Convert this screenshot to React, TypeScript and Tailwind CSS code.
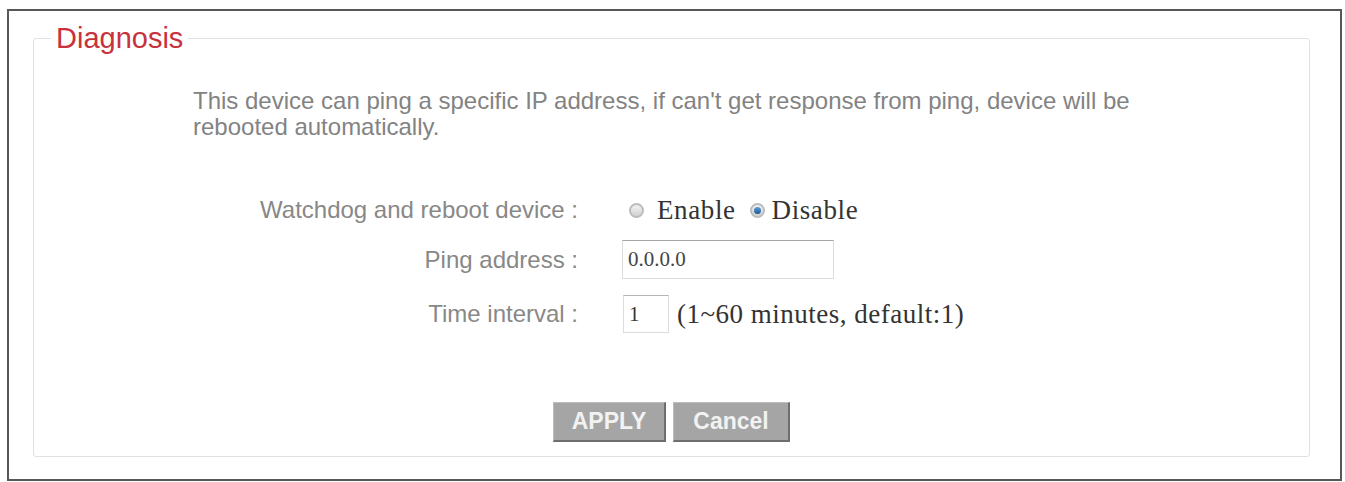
import React, { useState } from 'react';

const sans = { fontFamily: '"Liberation Sans", Arial, sans-serif' };
const serif = { fontFamily: '"Liberation Serif", "Times New Roman", serif' };

// Small round radio drawn by hand so it keeps the old grey/blue look
const Radio: React.FC<{ checked: boolean; onClick: () => void }> = ({ checked, onClick }) => (
  <span
    onClick={onClick}
    className="inline-flex items-center justify-center w-[15px] h-[15px] rounded-full border-2 border-[#bcbcbc] bg-gradient-to-b from-[#f2f2f2] to-[#d2d2d2] cursor-pointer"
  >
    {checked && <span className="w-[7px] h-[7px] rounded-full bg-gradient-to-b from-[#5d9fd9] to-[#1a5a95]" />}
  </span>
);

const FormRow: React.FC<{ label: string; className?: string; children: React.ReactNode }> = ({ label, className, children }) => (
  <div className={`grid grid-cols-[544px_1fr] items-center ${className || ''}`}>
    <div className="text-right text-[24px] text-[#888888] leading-none" style={sans}>{label}</div>
    <div className="pl-[44px] flex items-center">{children}</div>
  </div>
);

export default function App() {
  const [watchdog, setWatchdog] = useState(false);
  const [ping, setPing] = useState('0.0.0.0');
  const [interval, setInterval] = useState('1');

  return (
    <div className="w-[1345px] h-[482px] bg-white pt-[9px] pl-[7px]">
      <div className="w-[1335px] h-[472px] border-2 border-[#575757] bg-white">
        <fieldset className="ml-[24px] mr-[30px] mt-[12px] h-[434px] border border-[#e1e1e1] rounded-[3px]">
          <legend className="ml-[17px] px-[5px] text-[29px] leading-[30px] text-[#c8323d]" style={sans}>
            Diagnosis
          </legend>

          <p className="ml-[159px] mt-[35px] w-[1000px] text-[24px] leading-[26px] text-[#838383]" style={sans}>
            This device can ping a specific IP address, if can't get response from ping, device will be rebooted automatically.
          </p>

          <FormRow label="Watchdog and reboot device :" className="mt-[50px] h-[38px]">
            <div className="flex items-center text-[27px] text-[#333] tracking-[0.6px]" style={serif}>
              <span className="ml-[7px] flex"><Radio checked={watchdog} onClick={() => setWatchdog(true)} /></span>
              <span className="ml-[13px]">Enable</span>
              <span className="ml-[14px] flex"><Radio checked={!watchdog} onClick={() => setWatchdog(false)} /></span>
              <span className="ml-[7px]">Disable</span>
            </div>
          </FormRow>

          <FormRow label="Ping address :" className="mt-[12px]">
            <input
              value={ping}
              onChange={e => setPing(e.target.value)}
              className="w-[212px] h-[39px] px-[5px] border border-[#dcdcdc] border-t-[#a4a4a4] text-[21px] text-[#444] outline-none"
              style={serif}
            />
          </FormRow>

          <FormRow label="Time interval :" className="mt-[15px]">
            <input
              value={interval}
              onChange={e => setInterval(e.target.value)}
              className="ml-[1px] w-[46px] h-[38px] px-[5px] border border-[#dcdcdc] border-t-[#b4b4b4] text-[21px] text-[#333] outline-none"
              style={serif}
            />
            <span className="ml-[8px] text-[27px] text-[#333] tracking-[0.5px]" style={serif}>
              (1~60 minutes, default:1)
            </span>
          </FormRow>

          <div className="mt-[67px] flex justify-center gap-[7px]" style={sans}>
            <button className="w-[113px] h-[40px] bg-[#a5a5a5] border border-[#bdbdbd] border-r-2 border-b-2 border-r-[#6e6e6e] border-b-[#6e6e6e] text-[23px] font-bold text-[#f2f2f2]">
              APPLY
            </button>
            <button className="w-[117px] h-[40px] bg-[#a5a5a5] border border-[#bdbdbd] border-r-2 border-b-2 border-r-[#6e6e6e] border-b-[#6e6e6e] text-[23px] font-bold text-[#f2f2f2]">
              Cancel
            </button>
          </div>
        </fieldset>
      </div>
    </div>
  );
}
